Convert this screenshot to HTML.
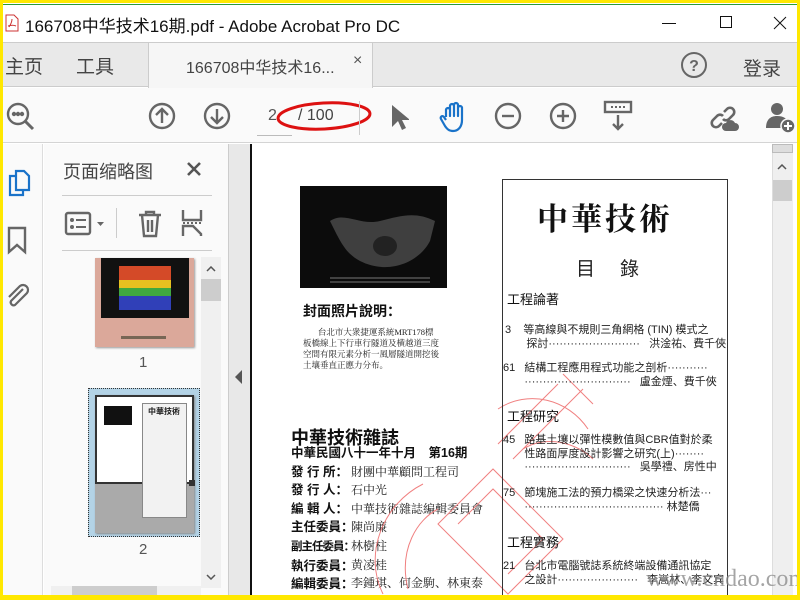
<!DOCTYPE html>
<html><head><meta charset="utf-8"><style>
*{margin:0;padding:0;box-sizing:border-box}
body{width:800px;height:600px;overflow:hidden;background:#ffe800;position:relative;font-family:"Liberation Sans","Noto Sans CJK SC",sans-serif;color:#333}
.a{position:absolute}
.t{position:absolute;white-space:nowrap}
.tc{font-family:"Liberation Serif","Noto Serif CJK SC",serif}
</style></head><body>
<div class="a" style="left:3px;top:3px;width:794px;height:592px;background:#fff;overflow:hidden">
<div class="a" style="left:0;top:1px;width:794px;height:1px;background:#2a9a3a"></div>
</div>
<div class="a" style="left:3px;top:4px;width:794px;height:591px;overflow:hidden">
<svg class="a" style="left:2px;top:10px" width="14" height="18"><path d="M1 1h8l4 4v12H1z" fill="#fff" stroke="#c33"/><path d="M4 13c2-3 3-6 3-8M3 12c3-1 6-1 8 0" stroke="#c33" fill="none"/></svg>
<div class="t" style="left:22px;top:8px;font-size:17px;color:#111">166708中华技术16期.pdf - Adobe Acrobat Pro DC</div>
<div class="a" style="left:659px;top:19px;width:14px;height:1px;background:#111"></div>
<div class="a" style="left:717px;top:12px;width:12px;height:12px;border:1px solid #111"></div>
<svg class="a" style="left:770px;top:12px" width="14" height="14"><path d="M1 1L13 13M13 1L1 13" stroke="#111"/></svg>
<div class="a" style="left:0;top:38px;width:794px;height:45px;background:#e9e9e9;border-top:1px solid #ccc;border-bottom:1px solid #ccc"></div>
<div class="a" style="left:145px;top:39px;width:225px;height:45px;background:#f6f6f6;border-left:1px solid #ccc;border-right:1px solid #ccc"></div>
<div class="t" style="left:2px;top:48px;font-size:19px;color:#444">主页</div>
<div class="t" style="left:73px;top:48px;font-size:19px;color:#444">工具</div>
<div class="t" style="left:183px;top:50px;font-size:16px;color:#444">166708中华技术16...</div>
<div class="t" style="left:350px;top:48px;font-size:16px;color:#555">×</div>
<svg class="a" style="left:677px;top:47px" width="28" height="28"><circle cx="14" cy="14" r="12" fill="none" stroke="#666" stroke-width="2"/><text x="14" y="20" font-size="16" font-weight="bold" text-anchor="middle" fill="#666" font-family="Liberation Sans">?</text></svg>
<div class="t" style="left:740px;top:50px;font-size:19px;color:#444">登录</div>
<div class="a" style="left:0;top:84px;width:794px;height:55px;background:#fafafa;border-bottom:1px solid #d4d4d4"></div>
<svg class="a" style="left:3px;top:98px" width="30" height="30" fill="none" stroke="#666" stroke-width="2.4"><circle cx="12" cy="12" r="10"/><path d="M19 19l8 8" stroke-width="3"/><circle cx="8" cy="12" r="1" fill="#666"/><circle cx="12" cy="12" r="1" fill="#666"/><circle cx="16" cy="12" r="1" fill="#666"/></svg>
<svg class="a" style="left:145px;top:98px" width="28" height="28" fill="none" stroke="#666" stroke-width="2.4"><circle cx="14" cy="14" r="12"/><path d="M14 21V7M8 13l6-6 6 6"/></svg>
<svg class="a" style="left:200px;top:98px" width="28" height="28" fill="none" stroke="#666" stroke-width="2.4"><circle cx="14" cy="14" r="12"/><path d="M14 7v14M8 15l6 6 6-6"/></svg>
<div class="t" style="left:265px;top:103px;font-size:16px;color:#555">2</div>
<div class="a" style="left:254px;top:131px;width:35px;height:1px;background:#bbb"></div>
<div class="t" style="left:295px;top:103px;font-size:16px;color:#444">/ 100</div>
<svg class="a" style="left:272px;top:93px" width="100" height="40"><ellipse cx="49" cy="19" rx="46" ry="13" fill="none" stroke="#d11" stroke-width="3" transform="rotate(-3 49 19)"/></svg>
<div class="a" style="left:356px;top:97px;width:1px;height:34px;background:#ccc"></div>
<svg class="a" style="left:386px;top:99px" width="20" height="28"><path d="M3 2v22l6-6 4 9 4-2-4-8h8z" fill="#666"/></svg>
<svg class="a" style="left:436px;top:97px" width="32" height="32" fill="none" stroke="#1a73c9" stroke-width="2.2" stroke-linejoin="round"><path d="M7 16V9a2 2 0 014 0v6V5a2 2 0 014 0v10V4a2 2 0 014 0v11V7a2 2 0 014 0v12c0 7-4 11-9 11-4 0-6-2-8-5l-4-7c-1-2 1-4 3-2l2 3"/></svg>
<svg class="a" style="left:491px;top:98px" width="28" height="28" fill="none" stroke="#666" stroke-width="2.4"><circle cx="14" cy="14" r="12"/><path d="M8 14h12"/></svg>
<svg class="a" style="left:546px;top:98px" width="28" height="28" fill="none" stroke="#666" stroke-width="2.4"><circle cx="14" cy="14" r="12"/><path d="M8 14h12M14 8v12"/></svg>
<svg class="a" style="left:600px;top:96px" width="30" height="32"><rect x="2" y="2" width="26" height="10" fill="none" stroke="#666" stroke-width="2.4"/><path d="M8 7h2M12 7h2M16 7h2M20 7h2" stroke="#666" stroke-width="2"/><path d="M15 15v14M10 24l5 5 5-5" fill="none" stroke="#666" stroke-width="2.4"/></svg>
<svg class="a" style="left:707px;top:100px" width="32" height="28" fill="none" stroke="#666" stroke-width="2.6"><path d="M14 8l3-3a4 4 0 016 6l-4 4a4 4 0 01-6 0"/><path d="M12 19l-3 3a4 4 0 01-6-6l4-4a4 4 0 016 0"/><path d="M16 27a4 4 0 010-8 5 5 0 019 0 4 4 0 010 8z" fill="#666" stroke="none"/></svg>
<svg class="a" style="left:762px;top:97px" width="32" height="34"><circle cx="12" cy="8" r="6" fill="#666"/><path d="M1 27c0-8 4-12 11-12s10 3 11 6l-4 6z" fill="#666"/><circle cx="23" cy="25" r="7" fill="#666" stroke="#fafafa" stroke-width="1.5"/><path d="M19 25h8M23 21v8" stroke="#fff" stroke-width="2"/></svg>
<div class="a" style="left:0;top:140px;width:40px;height:451px;background:#fafafa;border-right:1px solid #ddd"></div>
<svg class="a" style="left:4px;top:164px" width="26" height="30" fill="none" stroke="#1a73c9" stroke-width="2.2"><path d="M9 3h8l5 5v14H9z"/><path d="M9 8H3v19h13v-5"/></svg>
<svg class="a" style="left:4px;top:222px" width="20" height="30" fill="none" stroke="#666" stroke-width="2.4"><path d="M2 2h16v24l-8-7-8 7z"/></svg>
<svg class="a" style="left:2px;top:279px" width="26" height="28" fill="none" stroke="#666" stroke-width="2.2"><path d="M18 6L6 18a3 3 0 004 4L22 10a5 5 0 00-7-7L4 14"/></svg>
<div class="a" style="left:41px;top:140px;width:184px;height:451px;background:#fafafa"></div>
<div class="t" style="left:60px;top:154px;font-size:18px;color:#444">页面缩略图</div>
<svg class="a" style="left:183px;top:157px" width="16" height="16"><path d="M2 2l12 12M14 2L2 14" stroke="#555" stroke-width="2.6"/></svg>
<div class="a" style="left:59px;top:191px;width:150px;height:1px;background:#ccc"></div>
<svg class="a" style="left:61px;top:207px" width="46" height="26"><rect x="2" y="2" width="24" height="21" rx="2" fill="none" stroke="#666" stroke-width="2.4"/><circle cx="8" cy="9" r="2" fill="#666"/><circle cx="8" cy="16" r="2" fill="#666"/><path d="M12 9h10M12 16h10" stroke="#666" stroke-width="2"/><path d="M33 11h7l-3.5 4z" fill="#666"/></svg>
<div class="a" style="left:113px;top:204px;width:1px;height:30px;background:#ccc"></div>
<svg class="a" style="left:134px;top:205px" width="28" height="30" fill="none" stroke="#666" stroke-width="2.4"><path d="M2 6h22M9 6V3h8v3M5 6l2 21h12l2-21M11 11v12M15 11v12"/></svg>
<svg class="a" style="left:176px;top:205px" width="26" height="30" fill="none" stroke="#666" stroke-width="2.4"><path d="M4 1v10h18V1M4 27V17h10l8 8v2"/><path d="M4 14h18" stroke-dasharray="2 2" stroke-width="2"/></svg>
<div class="a" style="left:59px;top:246px;width:150px;height:1px;background:#ccc"></div>
<div class="a" style="left:92px;top:254px;width:99px;height:89px;background:#dba89a;box-shadow:1px 1px 2px #999"></div>
<div class="a" style="left:98px;top:254px;width:88px;height:60px;background:#111"></div>
<div class="a" style="left:116px;top:262px;width:52px;height:14px;background:#d44a28"></div>
<div class="a" style="left:116px;top:276px;width:52px;height:8px;background:#e8c020"></div>
<div class="a" style="left:116px;top:284px;width:52px;height:8px;background:#40a840"></div>
<div class="a" style="left:116px;top:292px;width:52px;height:14px;background:#3040b8"></div>
<div class="a" style="left:118px;top:332px;width:45px;height:3px;background:#765"></div>
<div class="t" style="left:136px;top:350px;font-size:15px;color:#555">1</div>
<div class="a" style="left:85px;top:384px;width:112px;height:149px;background:#b3d3e6;border:1px dotted #333"></div>
<div class="a" style="left:92px;top:391px;width:99px;height:138px;background:#aaa;box-shadow:1px 1px 2px #888"></div>
<div class="a" style="left:92px;top:391px;width:99px;height:89px;background:#fff;border:2px solid #333"></div>
<div class="a" style="left:101px;top:402px;width:28px;height:19px;background:#111"></div>
<div class="a" style="left:139px;top:399px;width:45px;height:115px;border:1px solid #888;background:#f2f2f2"></div>
<div class="t" style="left:145px;top:402px;font-size:8px;font-weight:bold;color:#222">中華技術</div>
<div class="a" style="left:186px;top:476px;width:6px;height:6px;background:#333"></div>
<div class="t" style="left:136px;top:537px;font-size:15px;color:#555">2</div>
<div class="a" style="left:198px;top:253px;width:20px;height:331px;background:#f0f0f0"></div>
<div class="a" style="left:198px;top:275px;width:20px;height:22px;background:#cdcdcd"></div>
<svg class="a" style="left:203px;top:262px" width="10" height="6"><path d="M1 5l4-4 4 4" stroke="#555" fill="none" stroke-width="1.5"/></svg>
<svg class="a" style="left:203px;top:570px" width="10" height="6"><path d="M1 1l4 4 4-4" stroke="#555" fill="none" stroke-width="1.5"/></svg>
<div class="a" style="left:48px;top:582px;width:150px;height:10px;background:#f0f0f0"></div>
<div class="a" style="left:69px;top:582px;width:85px;height:10px;background:#cdcdcd"></div>
<div class="a" style="left:225px;top:140px;width:22px;height:451px;background:#e8e8e8;border-left:1px solid #ccc"></div>
<svg class="a" style="left:232px;top:366px" width="8" height="14"><path d="M7 0v14L0 7z" fill="#555"/></svg>
<div class="a" style="left:247px;top:140px;width:522px;height:451px;background:#fff;border-left:2px solid #111"></div>
<div class="a" style="left:769px;top:140px;width:21px;height:451px;background:#efefef;border-left:1px solid #ddd"></div>
<div class="a" style="left:769px;top:140px;width:21px;height:9px;background:#ddd;border:1px solid #bbb"></div>
<svg class="a" style="left:774px;top:160px" width="10" height="6"><path d="M1 5l4-4 4 4" stroke="#555" fill="none" stroke-width="1.5"/></svg>
<div class="a" style="left:770px;top:176px;width:19px;height:21px;background:#cdcdcd"></div>
<div class="a" style="left:297px;top:182px;width:147px;height:102px;background:#0c0c0c"></div>
<svg class="a" style="left:297px;top:182px" width="147" height="102"><path d="M30 35c15-10 30 5 50 0s35-10 55 0l-5 20c-10 20-40 35-70 20-15-8-20-20-30-40z" fill="#555" opacity=".7"/><ellipse cx="85" cy="60" rx="12" ry="10" fill="#222"/><path d="M30 92h100M30 96h100" stroke="#777"/></svg>
<div class="t" style="left:300px;top:297px;font-size:14px;color:#111;font-weight:bold">封面照片說明：</div>
<div class="t tc" style="left:300px;top:323px;font-size:8.5px;line-height:11px;color:#222">&nbsp;&nbsp;&nbsp;&nbsp;&nbsp;&nbsp;&nbsp;台北市大衆捷運系統MRT178標<br>板橋線上下行車行隧道及横越道三度<br>空間有限元素分析一風層隧道開挖後<br>土壤垂直正應力分布。</div>
<div class="t" style="left:288px;top:420px;font-size:18px;font-weight:bold;color:#111">中華技術雜誌</div>
<div class="t" style="left:288px;top:440px;font-size:12.5px;line-height:18.6px;color:#111;font-weight:bold">中華民國八十一年十月　第16期<br>發 行 所：<br>發 行 人：<br>編 輯 人：<br>主任委員：<br><span style="font-size:11.5px;letter-spacing:-1px">副主任委員：</span><br>執行委員：<br>編輯委員：</div>
<div class="t tc" style="left:348px;top:458.6px;font-size:12px;line-height:18.6px;color:#222">財團中華顧問工程司<br>石中光<br>中華技術雜誌編輯委員會<br>陳尚廉<br>林樹柱<br>黄凌桂<br>李鍾琪、何金駒、林東泰<br>陳潤博、崔伯義、曾清銓</div>
<svg class="a" style="left:345px;top:330px" width="260" height="270" fill="none" stroke="#f08080" stroke-width="1"><path d="M35 260c-20-40 0-90 40-110M60 255c-10-40 10-70 30-80"/><path d="M90 190l55-55 70 70-55 55zM110 190l35-35 50 50-35 35"/><path d="M150 110l60-60M165 125l70-70M215 40l30 30"/><path d="M240 95c-20-30-60-40-90-20M245 125c-15-15-45-25-70-10"/></svg>
<div class="a" style="left:499px;top:175px;width:226px;height:420px;border:1px solid #333;border-bottom:none"></div>
<div class="t tc" style="left:534px;top:190px;font-size:31px;font-weight:bold;letter-spacing:3px;color:#111">中華技術</div>
<div class="t" style="left:573px;top:250px;font-size:19px;letter-spacing:25px;color:#222">目錄</div>
<div class="t" style="left:504px;top:285px;font-size:13px;color:#111">工程論著</div>
<div class="t" style="left:502px;top:320px;font-size:11px;line-height:13.5px;color:#222">3&nbsp;&nbsp;&nbsp;&nbsp;等高線與不規則三角網格 (TIN) 模式之<br>&nbsp;&nbsp;&nbsp;&nbsp;&nbsp;&nbsp;&nbsp;探討·························&nbsp;&nbsp;&nbsp;洪淦祐、費千俠</div>
<div class="t" style="left:500px;top:358px;font-size:11px;line-height:13.5px;color:#222">61&nbsp;&nbsp;&nbsp;結構工程應用程式功能之剖析···········<br>&nbsp;&nbsp;&nbsp;&nbsp;&nbsp;&nbsp;&nbsp;·····························&nbsp;&nbsp;&nbsp;盧金煙、費千俠</div>
<div class="t" style="left:504px;top:402px;font-size:13px;color:#111">工程研究</div>
<div class="t" style="left:500px;top:430px;font-size:11px;line-height:13.5px;color:#222">45&nbsp;&nbsp;&nbsp;路基土壤以彈性模數值與CBR值對於柔<br>&nbsp;&nbsp;&nbsp;&nbsp;&nbsp;&nbsp;&nbsp;性路面厚度設計影響之研究(上)········<br>&nbsp;&nbsp;&nbsp;&nbsp;&nbsp;&nbsp;&nbsp;·····························&nbsp;&nbsp;&nbsp;吳學禮、房性中</div>
<div class="t" style="left:500px;top:483px;font-size:11px;line-height:13.5px;color:#222">75&nbsp;&nbsp;&nbsp;節塊施工法的預力橋梁之快速分析法···<br>&nbsp;&nbsp;&nbsp;&nbsp;&nbsp;&nbsp;&nbsp;······································&nbsp;林楚僑</div>
<div class="t" style="left:504px;top:528px;font-size:13px;color:#111">工程實務</div>
<div class="t" style="left:500px;top:556px;font-size:11px;line-height:13.5px;color:#222">21&nbsp;&nbsp;&nbsp;台北市電腦號誌系統終端設備通訊協定<br>&nbsp;&nbsp;&nbsp;&nbsp;&nbsp;&nbsp;&nbsp;之設計······················&nbsp;&nbsp;&nbsp;李嵩林、李文宾</div>
<div class="t tc" style="left:643px;top:562px;font-size:24px;color:#888;opacity:.75">www.cndao.com</div>
</div>
</body></html>
